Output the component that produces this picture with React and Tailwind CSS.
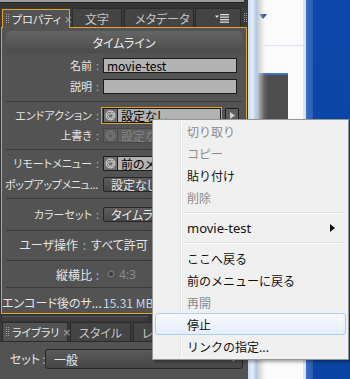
import React from "react";

const JP = "font-['Noto_Sans_CJK_JP','Noto_Sans',sans-serif]";

function Swirl({ disabled }) {
  const c = disabled ? "#7c7c7c" : "#cfcfcf";
  return (
    <div
      className={
        disabled
          ? "w-[15px] h-[15px] border border-[#484848] bg-[#5c5c5c] flex items-center justify-center shrink-0"
          : "w-[15px] h-[15px] border border-[#1c1c1c] bg-[#707070] flex items-center justify-center shrink-0"
      }
    >
      <svg width="11" height="11" viewBox="0 0 11 11">
        <circle cx="5.5" cy="5.5" r="4.4" fill="none" stroke={c} strokeWidth="1.1" />
        <path
          d="M5.5 2.8 A2.7 2.7 0 1 1 2.8 5.5 A1.8 1.8 0 0 1 4.6 3.7 A1.1 1.1 0 0 1 5.7 4.8"
          fill="none"
          stroke={c}
          strokeWidth="1.1"
        />
      </svg>
    </div>
  );
}

function Row({ label, children, className = "h-[15px]" }) {
  return (
    <div className={"flex items-center " + className}>
      <div className="w-[90px] text-right text-[#e4e4e4] whitespace-nowrap">{label}</div>
      <div className="w-[11px] text-center text-[#9cb3cc]">:</div>
      <div className="flex-1 flex items-center">{children}</div>
    </div>
  );
}

function Sep() {
  return <div className="h-px mx-[4px] bg-[#3c3c3c]" />;
}

function LightBox({ children, className = "" }) {
  return (
    <div
      className={
        "h-[15px] bg-[#b3b3b3] border border-[#1c1c1c] text-black flex items-center pl-[3px] whitespace-nowrap overflow-hidden text-[12px] " +
        className
      }
    >
      {children}
    </div>
  );
}

function DarkButton({ children }) {
  return (
    <div className="h-[15px] w-[135px] rounded-[2px] border border-[#262626] bg-gradient-to-b from-[#5e5e5e] to-[#474747] text-[#e6e6e6] flex items-center pl-[7px] whitespace-nowrap overflow-hidden text-[12px]">
      {children}
    </div>
  );
}

function Tab({ children, active, className = "" }) {
  return (
    <div
      className={
        (active
          ? "bg-[#535353] border-t border-l border-r border-[#e0a526] -mb-px relative z-10 text-[#e8e8e8] "
          : "bg-[#444444] border-t border-l border-r border-[#2c2c2c] text-[#c4c4c4] ") +
        "flex items-center h-full whitespace-nowrap text-[12px] " +
        className
      }
    >
      {children}
    </div>
  );
}

function Grip() {
  return (
    <div className="flex gap-[1px] h-[10px] shrink-0">
      <div className="w-px h-full bg-[repeating-linear-gradient(to_bottom,#9a9a9a_0_1px,transparent_1px_2px)]" />
      <div className="w-px h-full bg-[repeating-linear-gradient(to_bottom,#9a9a9a_0_1px,transparent_1px_2px)]" />
    </div>
  );
}

function MenuItem({ children, disabled, hover, arrow }) {
  return (
    <div
      className={
        (hover
          ? "border border-[#aecdf1] rounded-[3px] bg-gradient-to-b from-[#f6f9fe] to-[#e4eefa] "
          : "border border-transparent ") +
        "h-[22px] flex items-center pl-[31px] pr-[10px] relative " +
        (disabled ? "text-[#8d8d8d]" : "text-[#111]")
      }
    >
      <span className="flex-1">{children}</span>
      {arrow && (
        <svg width="5" height="8" viewBox="0 0 5 8">
          <path d="M0 0 L5 4 L0 8 Z" fill="#111" />
        </svg>
      )}
    </div>
  );
}

function MenuSep({ className = "h-[9px]" }) {
  return (
    <div className={"flex flex-col justify-center pl-[30px] pr-[2px] " + className}>
      <div className="h-px bg-[#e0e0e0]" />
      <div className="h-px bg-white" />
    </div>
  );
}

export default function App() {
  return (
    <div className={"w-[350px] h-[379px] relative overflow-hidden flex text-[11px] leading-[15px] [font-feature-settings:'palt'] " + JP}>
      {/* Left panel */}
      <div className="w-[248px] h-full flex flex-col bg-[#353535] shrink-0">
        {/* top strip */}
        <div className="h-[8px] flex flex-col">
          <div className="h-[3px] mr-[4px] bg-[#9c9c9c] border-b border-[#1e1e1e]" />
        </div>
        {/* Tab row 1 */}
        <div className="h-[19px] flex items-end pl-[2px] bg-[#3a3a3a]">
          <Tab active className="w-[68px] pl-[3px] gap-[3px]">
            <Grip />
            <span className="text-[11px]">プロパティ</span>
            <span className="text-[#a8a8a8] text-[10px] ml-auto mr-[3px] shrink-0 [font-family:'DejaVu_Sans',sans-serif]">×</span>
          </Tab>
          <Tab className="w-[50px] ml-[2px] justify-center">文字</Tab>
          <Tab className="w-[70px] ml-[2px] pl-[10px] overflow-hidden">メタデータ</Tab>
          <Tab className="w-[46px] ml-px justify-end pr-[11px]">
            <svg width="14" height="9" viewBox="0 0 14 9">
              <path d="M0 1.5 L4 1.5 L2 4 Z" fill="#dcdcdc" />
              <rect x="5" y="0" width="9" height="1.3" fill="#dcdcdc" />
              <rect x="5" y="2.5" width="9" height="1.3" fill="#dcdcdc" />
              <rect x="5" y="5" width="9" height="1.3" fill="#dcdcdc" />
              <rect x="5" y="7.5" width="9" height="1.3" fill="#dcdcdc" />
            </svg>
          </Tab>
          <div className="h-full flex items-center pl-[3px]">
            <Grip />
          </div>
        </div>
        {/* Panel content */}
        <div className="h-[287px] ml-px w-[246px] border border-[#e0a526] bg-[#535353] flex flex-col">
          <div className="h-[3px]" />
          <div className="h-[22px] mx-[4px] rounded-[5px] bg-gradient-to-b from-[#656565] to-[#4b4b4b] text-[#ececec] text-[12px] flex items-center justify-center">
            タイムライン
          </div>
          <div className="h-[5px]" />
          <Row label="名前">
            <LightBox className="w-[134px]">movie-test</LightBox>
          </Row>
          <div className="h-[6px]" />
          <Row label="説明">
            <LightBox className="w-[134px]" />
          </Row>
          <div className="h-[7px]" />
          <Sep />
          <div className="h-[5px]" />
          <Row label="エンドアクション" className="h-[17px]">
            <div className="-ml-[2px] h-[17px] w-[121px] border border-[#e0a526] flex items-center pl-px">
              <Swirl />
              <LightBox className="flex-1 border-l-0">設定なし</LightBox>
            </div>
            <div className="ml-[3px] w-[14px] h-[15px] border border-[#1c1c1c] rounded-[2px] bg-[#5e5e5e] flex items-center justify-center">
              <svg width="5" height="7" viewBox="0 0 5 7">
                <path d="M0 0 L5 3.5 L0 7 Z" fill="#cfcfcf" />
              </svg>
            </div>
          </Row>
          <div className="h-[4px]" />
          <Row label="上書き">
            <Swirl disabled />
            <div className="h-[15px] w-[104px] bg-[#5e5e5e] border border-[#484848] border-l-0 text-[#868686] text-[12px] flex items-center pl-[3px]">
              設定なし
            </div>
          </Row>
          <div className="h-[6px]" />
          <Sep />
          <div className="h-[6px]" />
          <Row label="リモートメニュー">
            <Swirl />
            <LightBox className="w-[104px] border-l-0">前のメニューに戻る</LightBox>
          </Row>
          <div className="h-[6px]" />
          <div className="flex items-center h-[15px]">
            <div className="w-[96px] text-right text-[#e4e4e4] whitespace-nowrap tracking-[-0.3px]">ポップアップメニュ...</div>
            <div className="ml-[5px]">
              <DarkButton>設定なし</DarkButton>
            </div>
          </div>
          <div className="h-[6px]" />
          <Sep />
          <div className="h-[8px]" />
          <Row label="カラーセット">
            <DarkButton>タイムライン</DarkButton>
          </Row>
          <div className="h-[8px]" />
          <Sep />
          <div className="h-[26px] flex items-center text-[12px]">
            <div className="w-[76px] text-right text-[#e4e4e4]">ユーザ操作</div>
            <div className="w-[13px] text-center text-[#9cb3cc]">:</div>
            <div className="text-[#e4e4e4]">すべて許可</div>
          </div>
          <div className="h-[3px]" />
          <Sep />
          <Row label="縦横比" className="h-[26px] text-[12px]">
            <div className="ml-[3px] w-[10px] h-[10px] rounded-full bg-[#6a6a6a] border border-[#4a4a4a] flex items-center justify-center">
              <div className="w-[4px] h-[4px] rounded-full bg-[#3a3a3a]" />
            </div>
            <span className="ml-[3px] text-[#8c8c8c] [font-family:'Noto_Sans',sans-serif]">4:3</span>
          </Row>
          <Sep />
          <div className="flex-1 flex items-end pb-[3px]">
            <div className="w-[96px] text-right text-[#e4e4e4] whitespace-nowrap text-[12px]">エンコード後のサ...</div>
            <div className="ml-[5px] text-[#c6d6e6] text-[12px]">15.31 MB</div>
          </div>
        </div>
        {/* dark strip */}
        <div className="h-[8px] flex items-center pl-[2px]">
          <div className="h-[5px] w-[146px] bg-[#3d3d3d] border-t border-[#5a5a5a]" />
        </div>
        {/* Tab row 2 */}
        <div className="h-[20px] flex items-end pl-[2px] bg-[#3a3a3a] border-b border-[#2c2c2c]">
          <Tab className="w-[66px] pl-[3px] gap-[3px] !bg-[#535353] !text-[#e8e8e8]">
            <Grip />
            <span className="text-[11px]">ライブラリ</span>
            <span className="text-[#a8a8a8] text-[10px] ml-auto mr-[3px] shrink-0 [font-family:'DejaVu_Sans',sans-serif]">×</span>
          </Tab>
          <Tab className="w-[61px] ml-[2px] justify-center">スタイル</Tab>
          <Tab className="w-[60px] ml-[2px] pl-[8px] overflow-hidden">レイヤー</Tab>
        </div>
        <div className="flex-1 bg-[#535353] flex items-start pt-[7px] text-[12px]">
          <div className="w-[40px] text-right text-[#e4e4e4] leading-[20px]">セット</div>
          <div className="w-[8px] text-center text-[#9cb3cc] leading-[20px]">:</div>
          <div className="ml-[-3px] h-[20px] w-[198px] rounded-[3px] border border-[#272727] bg-gradient-to-b from-[#5a5a5a] to-[#474747] text-[#e6e6e6] flex items-center pl-[8px]">
            <span className="flex-1">一般</span>
            <svg width="7" height="5" viewBox="0 0 7 5" className="mr-[5px]">
              <path d="M0 0 L7 0 L3.5 5 Z" fill="#9a9a9a" />
            </svg>
          </div>
        </div>
      </div>

      {/* Right background */}
      <div className="w-[9px] h-full bg-gradient-to-r from-[#c9dcef] via-[#e2edf8] to-[#aac5e3] shrink-0" />
      <div className="w-[46px] h-full bg-[#fbfbfb] relative shrink-0 flex flex-col">
        <div className="absolute left-0 top-0 bottom-0 w-[8px] bg-gradient-to-r from-[#c8c8c8] to-transparent" />
        <div className="h-[14px]" />
        <svg width="8" height="5" viewBox="0 0 8 5" className="ml-[2px]">
          <path d="M0 0 L8 0 L4 5 Z" fill="#1f4e96" />
        </svg>
        <div className="h-[26px]" />
        <div className="h-px ml-[6px] bg-[#dbe6f2]" />
        <div className="h-[27px]" />
        <div className="h-[2px] w-[30px] ml-px bg-[#3c74c6]" />
        <div className="w-[30px] ml-px h-[46px] bg-[#4e4e4e] flex">
          <div className="w-[9px] bg-[#5a5a5a]" />
        </div>
      </div>
      <div className="w-[3px] h-full bg-[#d7e5f5] shrink-0" />
      <div className="w-[7px] h-full bg-gradient-to-r from-[#3d6fc4] to-[#2a5cb5] shrink-0" />
      <div className="flex-1 h-full bg-gradient-to-b from-[#0c47a9] to-[#0b44a3]" />

      {/* Context menu */}
      <div className="absolute left-[152px] top-[119px] w-[197px] h-[241px] bg-[#f0f0f0] border border-[#979797] px-[2px] pt-0 shadow-[2px_2px_3px_rgba(0,0,0,0.35)] [font-feature-settings:normal] text-[12px]">
        <div className="absolute left-[27px] top-[2px] bottom-[2px] w-px bg-[#e2e3e3]" />
        <div className="absolute left-[28px] top-[2px] bottom-[2px] w-px bg-white" />
        <MenuItem disabled>切り取り</MenuItem>
        <MenuItem disabled>コピー</MenuItem>
        <MenuItem>貼り付け</MenuItem>
        <MenuItem disabled>削除</MenuItem>
        <MenuSep className="h-[9px]" />
        <MenuItem arrow>
          <span className="text-[13px] [font-family:'Noto_Sans',sans-serif]">movie-test</span>
        </MenuItem>
        <MenuSep className="h-[8px]" />
        <MenuItem>ここへ戻る</MenuItem>
        <MenuItem>前のメニューに戻る</MenuItem>
        <MenuItem disabled>再開</MenuItem>
        <MenuItem hover>停止</MenuItem>
        <MenuItem>リンクの指定...</MenuItem>
      </div>
    </div>
  );
}
